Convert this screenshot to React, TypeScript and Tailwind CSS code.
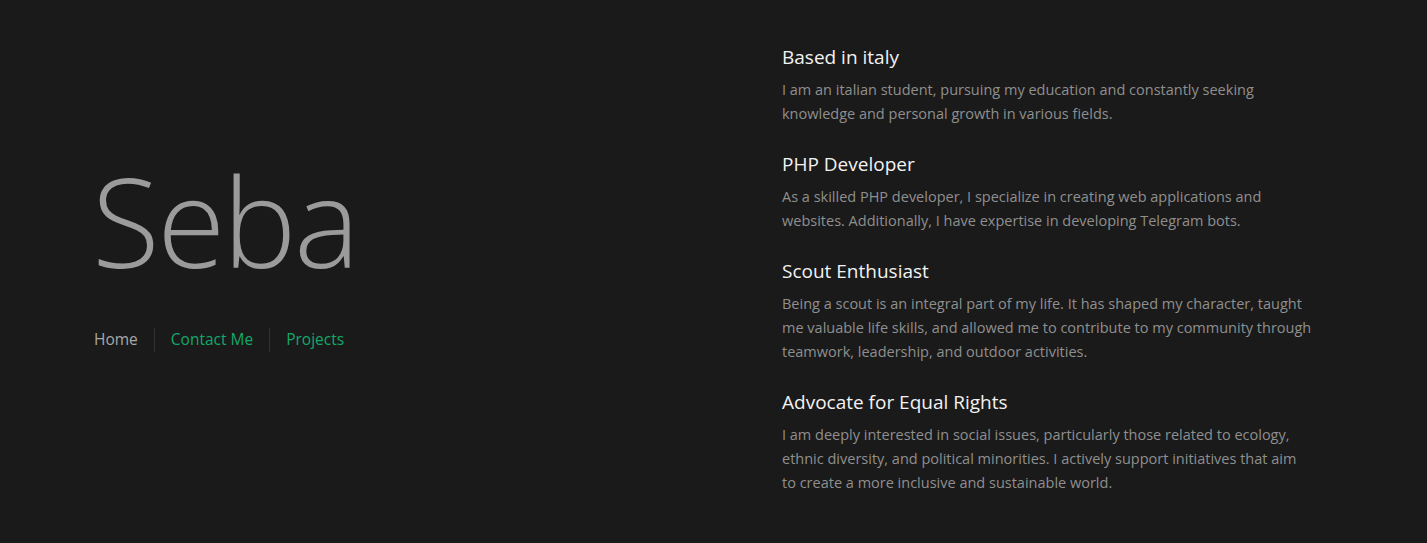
const sections = [
  {
    title: 'Based in italy',
    text: 'I am an italian student, pursuing my education and constantly seeking knowledge and personal growth in various fields.',
  },
  {
    title: 'PHP Developer',
    text: 'As a skilled PHP developer, I specialize in creating web applications and websites. Additionally, I have expertise in developing Telegram bots.',
  },
  {
    title: 'Scout Enthusiast',
    text: 'Being a scout is an integral part of my life. It has shaped my character, taught me valuable life skills, and allowed me to contribute to my community through teamwork, leadership, and outdoor activities.',
  },
  {
    title: 'Advocate for Equal Rights',
    text: 'I am deeply interested in social issues, particularly those related to ecology, ethnic diversity, and political minorities. I actively support initiatives that aim to create a more inclusive and sustainable world.',
  },
];

export default function App() {
  return (
    <div className="min-h-screen w-full bg-[#1a1a1a] font-['Open_Sans',sans-serif] flex items-center">
      <div className="w-[782px] pl-[94px] pb-[34px] flex flex-col">
        <h1 className="text-[124px] leading-none font-light text-[#9b9b9b] tracking-[-2.5px] -ml-[2px]">Seba</h1>
        <nav className="mt-[46px] flex items-center text-[15.5px]">
          <a className="pr-[16px] text-[#a8a8a8]">Home</a>
          <span className="h-[24px] w-px bg-[#333333]" />
          <a className="px-[16px] text-[#13a86a]">Contact Me</a>
          <span className="h-[24px] w-px bg-[#333333]" />
          <a className="pl-[16px] text-[#13a86a]">Projects</a>
        </nav>
      </div>
      <div className="w-[530px] flex flex-col gap-[25px] pb-[4px]">
        {sections.map((s) => (
          <div key={s.title}>
            <h2 className="text-[19px] leading-[26px] text-[#f2f2f2]">{s.title}</h2>
            <p className="mt-[8px] text-[14.5px] leading-[24px] text-[#8f8f8f]">{s.text}</p>
          </div>
        ))}
      </div>
    </div>
  );
}
